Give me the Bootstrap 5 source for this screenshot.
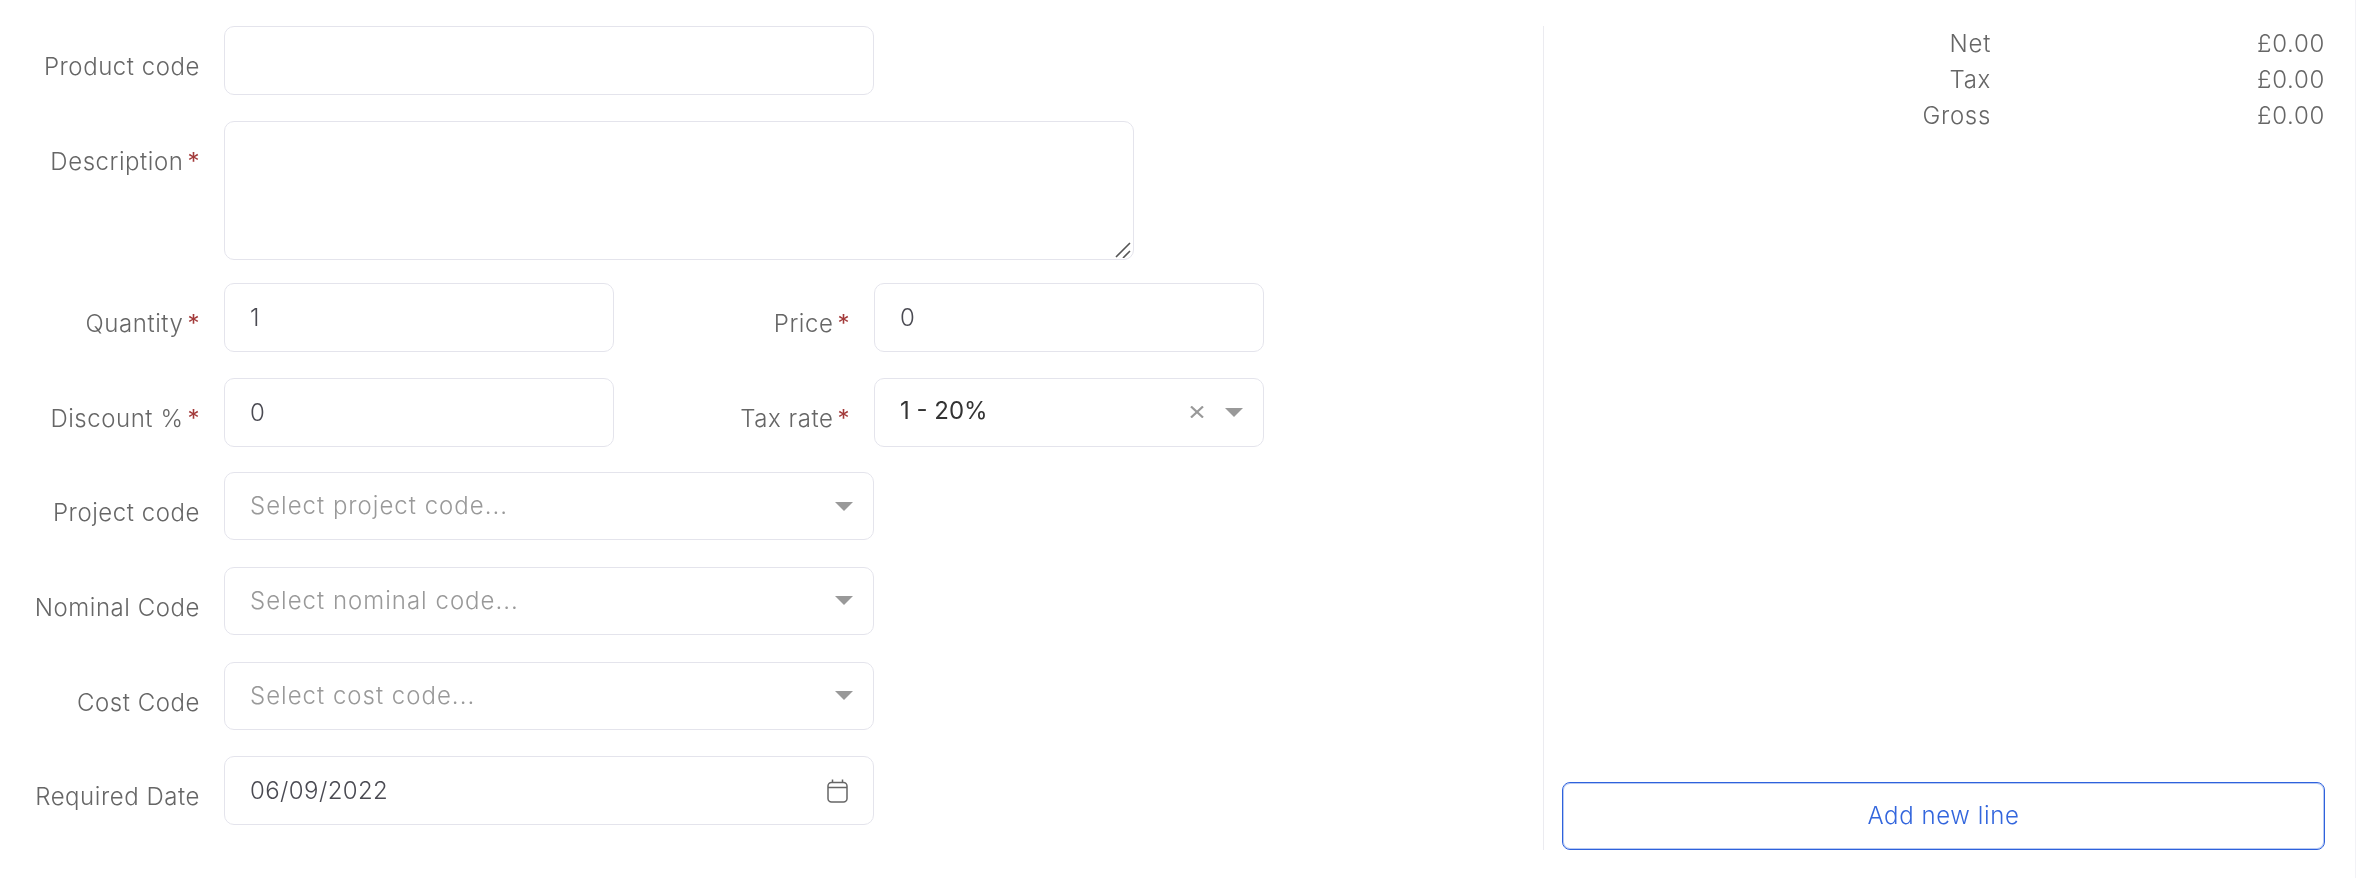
<!doctype html>
<html lang="en"><head><meta charset="utf-8"><title>Line</title>
<link href="https://cdn.jsdelivr.net/npm/bootstrap@5.3.0/dist/css/bootstrap.min.css" rel="stylesheet">
<style>
html,body{height:100%}
body{background:#fff;font-family:"Inter","Liberation Sans",sans-serif;font-size:24px;letter-spacing:.7px;font-weight:300;color:#666;overflow:hidden}
.pg{height:874px;width:2355px;border-bottom:1px solid #ebebf0;border-right:1px solid #f2f2f6;padding-top:26px;box-sizing:content-box;will-change:transform}
.fm{width:1543px;gap:25.6px}
.rw{gap:24px;min-height:69px}
.lb{width:200px;flex:none;text-align:right;padding-top:23px;line-height:36px;margin:0;color:#666;white-space:nowrap;letter-spacing:.55px}
.lb2{width:212px}
.rq{color:#a33b3b;margin-left:4px;font-weight:400}
.fc,.fc:focus{height:69px;border:1px solid #e4e4ec;border-radius:10px;padding:0 25px;font-size:24px;font-weight:300;letter-spacing:.4px;color:#4a4a52;box-shadow:none;background:#fff}
.wl{width:650px}
.wm{width:390px}
.tawrap{width:910px;height:139px;margin-bottom:-2px}
.ta,.ta:focus{width:100%;height:139px;resize:none}
.grip{position:absolute;right:3px;bottom:2px}
.bx-s{height:68px}
.cr{width:0;height:0;border-left:9px solid transparent;border-right:9px solid transparent;border-top:9px solid #999;margin-right:-5px}
.xx{margin-right:21px}
.sel{color:#333;font-weight:400;margin-top:-2px;letter-spacing:0}
.ph{color:#999;letter-spacing:1px}
.side{width:782px;padding:0 0 0 18px;border-left:1px solid #ebebf0;height:824px}
.tot{line-height:36px;color:#666}
.tk{width:429px;text-align:right}
.tv{flex:1;text-align:right}
.addb,.addb:hover{height:68px;border:1px solid #2f62dc;box-shadow:inset 0 0 0 1px rgba(51,102,221,.35);border-radius:8px;color:#3366dd;font-size:24px;font-weight:300;letter-spacing:.6px;background:#fff}
</style></head><body>
<div class="pg d-flex">
  <div class="fm d-flex flex-column">
    <div class="rw d-flex"><label class="lb">Product code</label><input class="form-control fc wl" type="text"></div>
    <div class="rw d-flex"><label class="lb">Description<span class="rq">*</span></label><div class="tawrap position-relative"><textarea class="form-control fc ta"></textarea><svg class="grip" width="16" height="16" viewBox="0 0 16 16"><path d="M15 1 1 15M15 9 8 16" stroke="#555" stroke-width="1.6" fill="none"/></svg></div></div>
    <div class="rw d-flex"><label class="lb">Quantity<span class="rq">*</span></label><input class="form-control fc wm" type="text" value="1"><label class="lb lb2">Price<span class="rq">*</span></label><input class="form-control fc wm" type="text" value="0"></div>
    <div class="rw d-flex"><label class="lb">Discount %<span class="rq">*</span></label><input class="form-control fc wm" type="text" value="0"><label class="lb lb2">Tax rate<span class="rq">*</span></label>
      <div class="form-control fc wm d-flex align-items-center justify-content-between"><span class="sel">1 - 20%</span><span class="d-flex align-items-center ms-auto"><svg class="xx" width="14" height="12" viewBox="0 0 14 12"><path d="M1 .5 13 11.5M13 .5 1 11.5" stroke="#999" stroke-width="2.2" fill="none"/></svg><span class="cr"></span></span></div></div>
    <div class="rw d-flex"><label class="lb">Project code</label><div class="form-control fc wl bx-s d-flex align-items-center justify-content-between"><span class="ph">Select project code...</span><span class="cr"></span></div></div>
    <div class="rw d-flex"><label class="lb">Nominal Code</label><div class="form-control fc wl bx-s d-flex align-items-center justify-content-between"><span class="ph">Select nominal code...</span><span class="cr"></span></div></div>
    <div class="rw d-flex"><label class="lb">Cost Code</label><div class="form-control fc wl bx-s d-flex align-items-center justify-content-between"><span class="ph">Select cost code...</span><span class="cr"></span></div></div>
    <div class="rw d-flex"><label class="lb">Required Date</label><div class="form-control fc wl d-flex align-items-center justify-content-between"><span class="dt">06/09/2022</span><svg width="21" height="24" viewBox="0 0 21 24"><path d="M5.5 .5v3M15.5 .5v3M1 8.5h19" stroke="#666" stroke-width="1.5" fill="none"/><rect x="1" y="3.5" width="19" height="19.5" rx="3.5" stroke="#666" stroke-width="1.5" fill="none"/></svg></div></div>
  </div>
  <div class="side d-flex flex-column justify-content-between">
    <div>
      <div class="tot d-flex"><span class="tk">Net</span><span class="tv">£0.00</span></div>
      <div class="tot d-flex"><span class="tk">Tax</span><span class="tv">£0.00</span></div>
      <div class="tot d-flex"><span class="tk">Gross</span><span class="tv">£0.00</span></div>
    </div>
    <button class="btn addb w-100" type="button">Add new line</button>
  </div>
</div>
</body></html>
